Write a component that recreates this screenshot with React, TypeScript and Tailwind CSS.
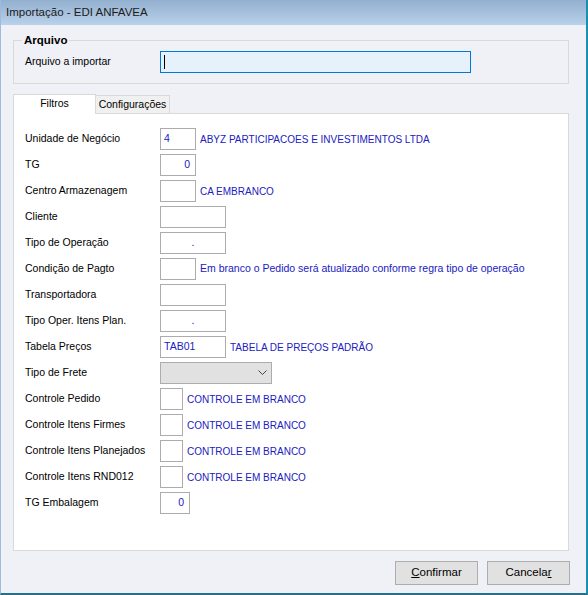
import React from 'react';

const font = { fontFamily: '"Liberation Sans", Arial, sans-serif' };

type Row = {
  label: string;
  width: string;
  value?: string;
  align?: 'left' | 'right' | 'center';
  desc?: string;
  select?: boolean;
};

const rows: Row[] = [
  { label: 'Unidade de Negócio', width: 'w-[36px]', value: '4', desc: 'ABYZ PARTICIPACOES E INVESTIMENTOS LTDA' },
  { label: 'TG', width: 'w-[36px]', value: '0', align: 'right' },
  { label: 'Centro Armazenagem', width: 'w-[36px]', desc: 'CA EMBRANCO' },
  { label: 'Cliente', width: 'w-[66px]' },
  { label: 'Tipo de Operação', width: 'w-[66px]', value: '.', align: 'center' },
  { label: 'Condição de Pagto', width: 'w-[36px]', desc: 'Em branco o Pedido será atualizado conforme regra tipo de operação' },
  { label: 'Transportadora', width: 'w-[66px]' },
  { label: 'Tipo Oper. Itens Plan.', width: 'w-[66px]', value: '.', align: 'center' },
  { label: 'Tabela Preços', width: 'w-[66px]', value: 'TAB01', desc: 'TABELA DE PREÇOS PADRÃO' },
  { label: 'Tipo de Frete', width: 'w-[112px]', select: true },
  { label: 'Controle Pedido', width: 'w-[23px]', desc: 'CONTROLE EM BRANCO' },
  { label: 'Controle Itens Firmes', width: 'w-[23px]', desc: 'CONTROLE EM BRANCO' },
  { label: 'Controle Itens Planejados', width: 'w-[23px]', desc: 'CONTROLE EM BRANCO' },
  { label: 'Controle Itens RND012', width: 'w-[23px]', desc: 'CONTROLE EM BRANCO' },
  { label: 'TG Embalagem', width: 'w-[30px]', value: '0', align: 'right' },
];

function Field({ row }: { row: Row }) {
  if (row.select) {
    return (
      <div className={`${row.width} h-[22px] border border-[#adadad] bg-[#e1e1e1] flex items-center justify-end pr-[4px]`}>
        <svg width="9" height="6" viewBox="0 0 9 6">
          <path d="M0.5 0.5 L4.5 4.5 L8.5 0.5" fill="none" stroke="#444" strokeWidth="1" />
        </svg>
      </div>
    );
  }
  const just =
    row.align === 'right' ? 'justify-end pr-[5px]' : row.align === 'center' ? 'justify-center' : 'justify-start pl-[3px]';
  return (
    <div className={`${row.width} h-[22px] border border-[#acacac] bg-white flex items-center ${just} text-[10.5px] text-[#2020c0]`}>
      {row.value}
    </div>
  );
}

export default function App() {
  return (
    <div style={font} className="w-[588px] h-[595px] flex flex-col bg-[#f0f1f7] border-l border-l-[#9dbbe0] border-r-2 border-r-[#1a8fb0] border-b-2 border-b-[#2a6f86] text-black overflow-hidden">
      {/* title bar */}
      <div className="h-[25px] shrink-0 bg-gradient-to-b from-[#93b0cf] to-[#b9d1ea] flex items-center pl-[5px] text-[11.5px] text-[#1b1b1b]">
        Importação - EDI ANFAVEA
      </div>

      <div className="flex-1 flex flex-col px-[12px]">
        {/* Arquivo group */}
        <fieldset className="mt-[8px] border border-[#d9d9d9] h-[51px] px-[7px] w-[556px]">
          <legend className="px-[2px] ml-[1px] text-[11.5px] font-bold leading-[14px]">Arquivo</legend>
          <div className="flex items-center mt-[4px]">
            <span className="w-[139px] pl-[4px] text-[10.5px]">Arquivo a importar</span>
            <div className="w-[311px] h-[22px] border border-[#0078d7] bg-[#e5f1fb] flex items-center pl-[3px]">
              <div className="w-px h-[14px] bg-black" />
            </div>
          </div>
        </fieldset>

        {/* tabs */}
        <div className="mt-[10px] flex items-end w-[556px]">
          <div className="relative z-10 w-[83px] h-[20px] bg-white border border-b-0 border-[#d9d9d9] flex items-center justify-center text-[10.5px] mb-[-1px] pb-[1px]">
            Filtros
          </div>
          <div className="w-[74px] h-[18px] bg-[#f0f0f0] border border-l-0 border-b-0 border-[#d9d9d9] flex items-center justify-center text-[10.5px]">
            Configurações
          </div>
        </div>
        <div className="w-[556px] h-[438px] bg-white border border-[#d9d9d9] pt-[14px] pl-[11px] flex flex-col gap-[4px]">
          {rows.map((r) => (
            <div key={r.label} className="flex items-center h-[22px]">
              <span className="w-[135px] shrink-0 text-[10.5px]">{r.label}</span>
              <Field row={r} />
              {r.desc && (
                <span
                  className={`ml-[4px] text-[#2020c0] whitespace-nowrap ${
                    r.desc === r.desc.toUpperCase() ? 'text-[10px]' : 'text-[10.5px]'
                  }`}
                >
                  {r.desc}
                </span>
              )}
            </div>
          ))}
        </div>

        {/* buttons */}
        <div className="mt-[10px] flex justify-end gap-[9px] pr-[4px]">
          <button className="w-[83px] h-[24px] bg-[#e1e1e1] border border-[#adadad] text-[11.5px]">
            <span className="underline">C</span>onfirmar
          </button>
          <button className="w-[83px] h-[24px] bg-[#e1e1e1] border border-[#adadad] text-[11.5px]">
            Cancela<span className="underline">r</span>
          </button>
        </div>
      </div>
    </div>
  );
}
